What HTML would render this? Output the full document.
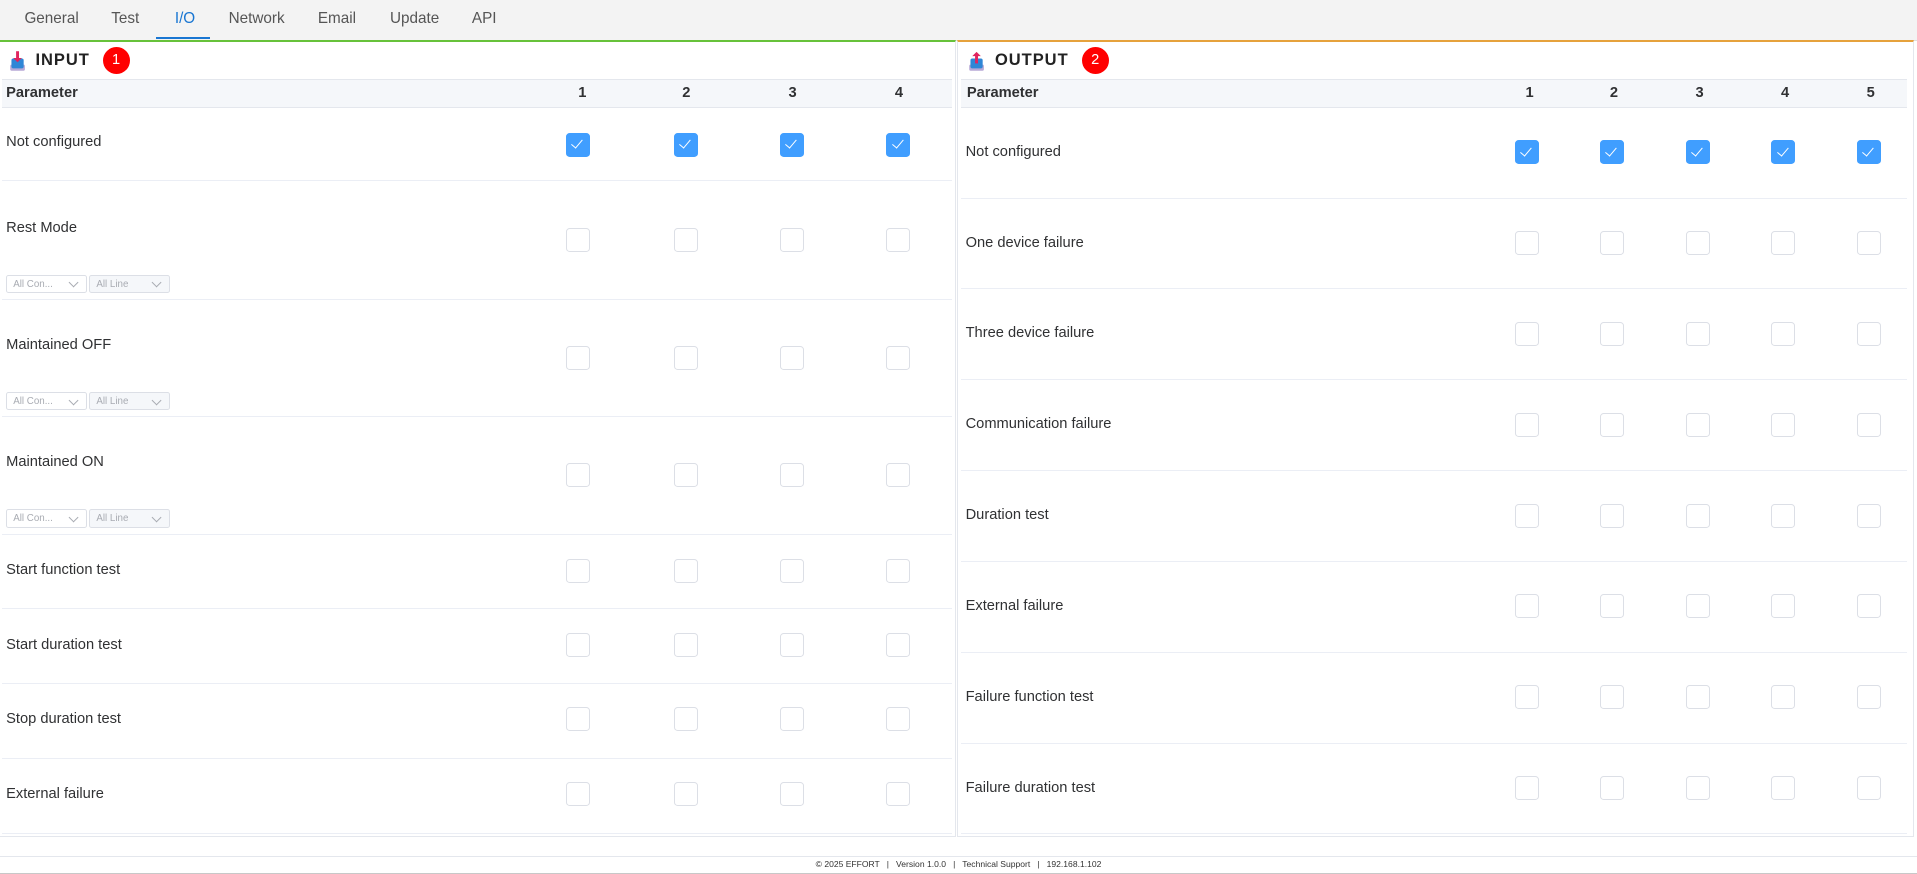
<!DOCTYPE html>
<html><head><meta charset="utf-8">
<style>
html,body{margin:0;padding:0;background:#fff;overflow:hidden}
body{width:1568px;height:715px;zoom:1.22258;font-family:"Liberation Sans",Arial,sans-serif;color:#303133;position:relative}
.tabs{position:absolute;left:0;top:0;width:1568px;height:33px;background:#f3f3f3;border-bottom:1px solid #e0e0e0}
.tab{position:absolute;top:8px;font-size:12.5px;color:#555}
.tab.act{color:#1976d2}
.ul{position:absolute;left:128px;top:30px;width:44px;height:2px;background:#1976d2}
.panel{position:absolute;top:33px;height:649px;border:1px solid #e4e7ed;border-top:2px solid #67c23a;background:#fff}
.title{position:absolute;top:7px;font-weight:bold;font-size:13.5px;letter-spacing:.8px;color:#222}
.badge{position:absolute;width:22px;height:22px;border-radius:50%;background:#f00;color:#fff;font-size:12px;text-align:center;line-height:22px;top:4px}
.hdr{position:absolute;left:2px;top:30px;height:22px;background:#f5f7fa;border-top:1px solid #e4e7ed;border-bottom:1px solid #e4e7ed;font-weight:bold;font-size:12px;line-height:22px}
.row{position:absolute;left:2px;border-bottom:1px solid #ebeef5}
.lbl{position:absolute;left:5px;font-size:12px;color:#303133}
.cb{position:absolute;width:18px;height:18px;border:1px solid #dcdfe6;border-radius:3px;background:#fff}
.cb.on{background:#409eff;border-color:#409eff}
.cb.on::after{content:"";position:absolute;left:6px;top:3px;width:4px;height:8px;border:solid #fff;border-width:0 1px 1px 0;transform:rotate(40deg)}
.sel{position:absolute;height:15px;border:1px solid #dcdfe6;border-radius:2px;font-size:8px;color:#a8abb2;line-height:15px;padding-left:5px;box-sizing:border-box}
.sel::after{content:"";position:absolute;right:7px;top:3px;width:5px;height:5px;border:solid #a8abb2;border-width:0 1px 1px 0;transform:rotate(45deg)}
.num{position:absolute;top:0}
.foot{position:absolute;left:0;top:700px;width:1568px;height:13px;border-top:1px solid #e4e7ed;border-bottom:1px solid #c8c8c8;font-size:7px;color:#333;text-align:center;line-height:13px}
</style></head><body>
<div class="tabs">
<span class="tab" style="left:20px">General</span>
<span class="tab" style="left:91px">Test</span>
<span class="tab act" style="left:143px">I/O</span>
<span class="tab" style="left:187px">Network</span>
<span class="tab" style="left:260px">Email</span>
<span class="tab" style="left:319px">Update</span>
<span class="tab" style="left:386px">API</span>
<div class="ul"></div>
</div>

<div class="panel" style="left:0;width:781px;border-left:none">
<svg style="position:absolute;left:7px;top:6px" width="14" height="18" viewBox="0 0 14 18"><rect x="1" y="12" width="12" height="5" rx="1" fill="#b7a9d6"/><rect x="2" y="7" width="10" height="8" rx="1.5" fill="#2f86d6"/><path d="M7 1v7" stroke="#e0245e" stroke-width="2.4"/><path d="M3.5 6.5L7 10l3.5-3.5z" fill="#e0245e"/></svg>
<div class="title" style="left:29px">INPUT</div>
<div class="badge" style="left:84px">1</div>
<div class="hdr" style="width:777px"><span style="position:absolute;left:3px">Parameter</span>
<span class="num" style="left:471px">1</span><span class="num" style="left:556px">2</span><span class="num" style="left:643px">3</span><span class="num" style="left:730px">4</span></div>
<div id="inrows"></div>
</div>

<div class="panel" style="left:783px;width:781px;border-top-color:#e6a23c">
<svg style="position:absolute;left:8px;top:6px" width="14" height="18" viewBox="0 0 14 18"><rect x="1" y="12" width="12" height="5" rx="1" fill="#b7a9d6"/><rect x="2" y="7" width="10" height="8" rx="1.5" fill="#2f86d6"/><path d="M7 11V4" stroke="#e0245e" stroke-width="2.4"/><path d="M3.5 5L7 1.5 10.5 5z" fill="#e0245e"/></svg>
<div class="title" style="left:30px">OUTPUT</div>
<div class="badge" style="left:101px">2</div>
<div class="hdr" style="width:774px"><span style="position:absolute;left:5px">Parameter</span>
<span class="num" style="left:462px">1</span><span class="num" style="left:531px">2</span><span class="num" style="left:601px">3</span><span class="num" style="left:671px">4</span><span class="num" style="left:741px">5</span></div>
<div id="outrows"></div>
</div>

<div class="foot">© 2025 EFFORT &nbsp; | &nbsp; Version 1.0.0 &nbsp; | &nbsp; Technical Support &nbsp; | &nbsp; 192.168.1.102</div>

<script>
(function(){
var P=document.getElementById('inrows');
var rows=[["Not configured",54,60,82,84,1,0],["Rest Mode",115,96,152,162,0,1],["Maintained OFF",211,96,248,258,0,1],["Maintained ON",307,96,344,354,0,1],["Start function test",403,61,432,433,0,0],["Start duration test",464,61,493,493,0,0],["Stop duration test",525,61,554,554,0,0],["External failure",586,62,615,615,0,0]];
var cx=[463,551,638,725];var h='';
rows.forEach(function(r){
 h+='<div class="row" style="top:'+r[1]+'px;height:'+(r[2]-1)+'px;width:777px"></div>';
 h+='<div class="lbl" style="top:'+(r[3]-7)+'px">'+r[0]+'</div>';
 cx.forEach(function(x){h+='<div class="cb'+(r[5]?' on':'')+'" style="left:'+x+'px;top:'+(r[4]-10)+'px"></div>';});
 if(r[6]){var sy=r[1]+r[2]-21;h+='<div class="sel" style="left:5px;top:'+sy+'px;width:66px">All Con...</div><div class="sel" style="left:73px;top:'+sy+'px;width:66px;background:#f5f7fa">All Line</div>';}
});
P.innerHTML=h;
var O=document.getElementById('outrows');
var names=["Not configured","One device failure","Three device failure","Communication failure","Duration test","External failure","Failure function test","Failure duration test"];
var ox=[455,525,595,665,735];h='';
names.forEach(function(n,i){
 var top=54+i*74.3;
 h+='<div class="row" style="top:'+top+'px;height:73px;width:774px"></div>';
 h+='<div class="lbl" style="left:6px;top:'+(top+29)+'px">'+n+'</div>';
 ox.forEach(function(x){h+='<div class="cb'+(i==0?' on':'')+'" style="left:'+x+'px;top:'+(top+26)+'px"></div>';});
});
O.innerHTML=h;
})();
</script>
</body></html>
